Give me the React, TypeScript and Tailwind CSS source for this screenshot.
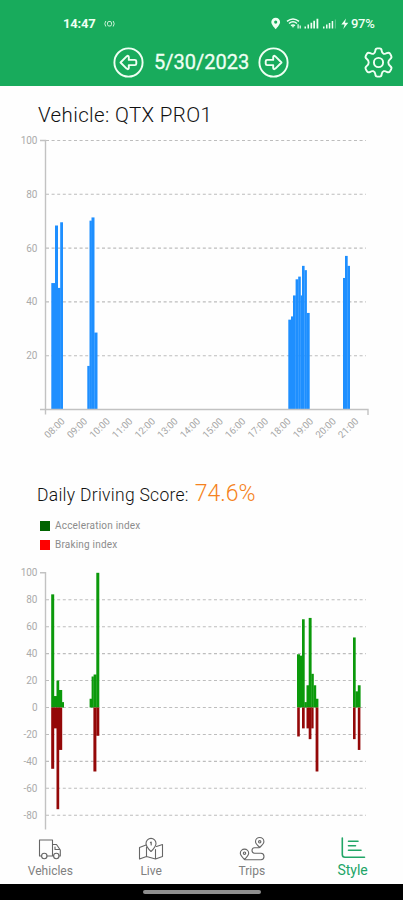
import type { ReactNode } from "react";

type BarType = {
  x: number;
  w: number;
  value: number;
};

type NavItemProps = {
  label: string;
  active?: boolean;
  children: ReactNode;
};

const hours = [
  "08:00", "09:00", "10:00", "11:00", "12:00", "13:00", "14:00",
  "15:00", "16:00", "17:00", "18:00", "19:00", "20:00", "21:00",
];

const speedBars: BarType[] = [
  { x: 51.3, w: 4.2, value: 47 },
  { x: 55, w: 3, value: 68.4 },
  { x: 57.8, w: 2.8, value: 45.2 },
  { x: 60.2, w: 2.8, value: 69.6 },
  { x: 87.3, w: 2.5, value: 16.2 },
  { x: 89.5, w: 2.4, value: 70.2 },
  { x: 91.5, w: 3, value: 71.4 },
  { x: 94.3, w: 3.2, value: 28.6 },
  { x: 288.3, w: 3, value: 33.4 },
  { x: 291, w: 2.4, value: 34.6 },
  { x: 293, w: 2.8, value: 42.4 },
  { x: 295.6, w: 2.8, value: 48.4 },
  { x: 298.2, w: 2.6, value: 49.4 },
  { x: 300.6, w: 1.6, value: 42.4 },
  { x: 302, w: 2.6, value: 53.4 },
  { x: 304.4, w: 2.5, value: 51.8 },
  { x: 306.7, w: 3, value: 35.9 },
  { x: 343, w: 2.3, value: 48.9 },
  { x: 345, w: 2.7, value: 57.1 },
  { x: 347.4, w: 2.6, value: 53.4 },
];

const accelerationBars: BarType[] = [
  { x: 51.2, w: 3, value: 84 },
  { x: 54, w: 3, value: 8.5 },
  { x: 56.5, w: 2.7, value: 20 },
  { x: 59, w: 3.2, value: 13 },
  { x: 62, w: 2, value: 4 },
  { x: 89.6, w: 2.4, value: 6.5 },
  { x: 91.6, w: 2.2, value: 23 },
  { x: 93.6, w: 3, value: 24.5 },
  { x: 96.3, w: 3, value: 100 },
  { x: 297, w: 3, value: 39.5 },
  { x: 299.8, w: 2.6, value: 38.5 },
  { x: 302, w: 2.7, value: 65.5 },
  { x: 304.4, w: 2.5, value: 4 },
  { x: 306.5, w: 2.5, value: 16.5 },
  { x: 308.7, w: 2.9, value: 66.5 },
  { x: 311.3, w: 2.5, value: 25 },
  { x: 313.6, w: 2.6, value: 16.5 },
  { x: 316, w: 2.4, value: 6.5 },
  { x: 353, w: 2.7, value: 52 },
  { x: 355.5, w: 2.6, value: 12 },
  { x: 357.8, w: 2.8, value: 16.5 },
];

const brakingBars: BarType[] = [
  { x: 51.2, w: 3, value: 45.5 },
  { x: 54, w: 3, value: 15.5 },
  { x: 56.5, w: 2.7, value: 75.5 },
  { x: 59, w: 3.2, value: 31.5 },
  { x: 93.4, w: 3, value: 47.5 },
  { x: 96.3, w: 3, value: 21 },
  { x: 297.2, w: 2.6, value: 21.5 },
  { x: 302, w: 2.7, value: 15.5 },
  { x: 306.5, w: 2.5, value: 15.5 },
  { x: 308.7, w: 2.7, value: 23.5 },
  { x: 311.2, w: 2.4, value: 15.5 },
  { x: 315.6, w: 2.8, value: 47.5 },
  { x: 353, w: 2.6, value: 23.5 },
  { x: 357.8, w: 2.6, value: 31.5 },
];

const SpeedChart = () => {
  const toY = (value: number) => 279.5 - value * 2.69;

  return (
    <svg width="403" height="320" viewBox="0 0 403 320" className="block">
      {[20, 40, 60, 80, 100].map((tick) => (
        <g key={tick}>
          <line x1="46" x2="366" y1={toY(tick)} y2={toY(tick)} stroke="#bdbdbd" strokeWidth="1.1" strokeDasharray="3 2.6" />
          <text x="37.5" y={toY(tick) + 3.5} textAnchor="end" fontSize="10" fill="#ababab">{tick}</text>
        </g>
      ))}
      {speedBars.map((bar) => (
        <rect key={bar.x} x={bar.x} width={bar.w} y={toY(bar.value)} height={bar.value * 2.69} fill="#1e8fff" />
      ))}
      <path d="M40 10.5H45.5V284.5M40 279.5H368V285" fill="none" stroke="#c2c2c2" strokeWidth="1.4" />
      {hours.map((hour, i) => (
        <text
          key={hour}
          transform={`translate(${54.5 + i * 22.6} 298) rotate(-45)`}
          y="3.3"
          textAnchor="middle"
          fontSize="9.7"
          fill="#a6a6a6"
        >
          {hour}
        </text>
      ))}
    </svg>
  );
};

const ScoreChart = () => {
  const zero = 147.5;
  const scale = 1.347;

  return (
    <svg width="403" height="270" viewBox="0 0 403 270" className="block">
      {[100, 80, 60, 40, 20, 0, -20, -40, -60, -80].map((tick) => (
        <g key={tick}>
          {tick !== 100 && (
            <line x1="46" x2="366" y1={zero - tick * scale} y2={zero - tick * scale} stroke="#bdbdbd" strokeWidth="1.1" strokeDasharray="3 2.6" />
          )}
          <text x="37.5" y={zero - tick * scale + 3.5} textAnchor="end" fontSize="10" fill="#ababab">{tick}</text>
        </g>
      ))}
      <path d="M40 12.8H45.5V269.5" fill="none" stroke="#c2c2c2" strokeWidth="1.4" />
      {accelerationBars.map((bar) => (
        <rect key={bar.x} x={bar.x} width={bar.w} y={zero - bar.value * scale} height={bar.value * scale} fill="#0b990b" />
      ))}
      {brakingBars.map((bar) => (
        <rect key={bar.x} x={bar.x} width={bar.w} y={zero} height={bar.value * scale} fill="#940808" />
      ))}
    </svg>
  );
};

const ArrowButton = ({ flip = false }: { flip?: boolean }) => {
  return (
    <button className="size-[31px]">
      <svg viewBox="0 0 31 31" className={flip ? "-scale-x-100" : ""} fill="none" stroke="#effff3" strokeLinejoin="round">
        <circle cx="15.5" cy="15.5" r="14.1" strokeWidth="1.9" />
        <path d="M7.5 15.5 13.6 9.4Q15.4 8 15.8 10V12.9H21.8Q23.3 12.9 23.3 14.2V16.8Q23.3 18.1 21.8 18.1H15.8V21Q15.4 23 13.6 21.6Z" strokeWidth="1.9" />
      </svg>
    </button>
  );
};

const StatusBar = () => {
  return (
    <div className="flex h-9 items-start pt-4 pl-[63px] text-[13px] leading-[15px] font-bold text-[#effff3]">
      <span className="w-[41px] tracking-[-0.2px]">14:47</span>
      <svg width="11" height="15" viewBox="0 0 11 15" fill="none" stroke="#c9f0d5" strokeWidth="1">
        <rect x="3.5" y="5.5" width="4" height="4.5" rx="1.5" />
        <path d="M1.8 5Q-.2 7.8 1.8 10.5M9.2 5Q11.2 7.8 9.2 10.5" />
      </svg>
      <div className="ml-[156px] flex">
        <svg width="80" height="15" viewBox="0 -0.5 80 15" fill="#effff3">
          <path fillRule="evenodd" d="M4.7 1.2A4.4 4.4 0 0 0 .3 5.6C.3 8.5 4.7 12.7 4.7 12.7S9.1 8.5 9.1 5.6A4.4 4.4 0 0 0 4.7 1.2ZM4.7 4A1.6 1.6 0 1 1 4.7 7.2A1.6 1.6 0 1 1 4.7 4Z" />
          <path d="M16 4.8Q22 0 28 4.8M18 7Q22 3.6 26 7M20 9.2Q22 7.6 24 9.2" fill="none" stroke="#effff3" strokeWidth="1.5" />
          <path d="M21 9.5H23L22 11.5ZM26.5 7.8H27.7V12H26.5ZM28.6 9H29.8V12H28.6Z" />
          <path d="M33.5 10H35V12H33.5ZM36.5 8H38V12H36.5ZM39.5 6.2H41.2V12H39.5ZM42.3 4.2H44V12H42.3ZM45.5 2.3H47.3V12H45.5Z" />
          <path d="M52 10H53.5V12H52ZM55 8H56.5V12H55ZM57.8 6.5H59.3V12H57.8ZM60.7 4.5H62.2V12H60.7Z" />
          <path d="M63.8 3H65V12H63.8Z" opacity=".3" />
          <path d="M75 2 70.3 8H73.6L72.3 12.5 77.3 6.3H74Z" />
        </svg>
        <span className="font-medium tracking-[-0.3px]">97%</span>
      </div>
    </div>
  );
};

const NavItem = ({ label, active = false, children }: NavItemProps) => {
  return (
    <button className={`flex flex-1 flex-col items-center pt-1.5 ${active ? "text-[#21a567]" : "text-[#666666]"}`}>
      <svg width="26" height="26" viewBox="0 0 26 26" fill="none" stroke="currentColor" strokeWidth="1.1" strokeLinecap="round" strokeLinejoin="round">
        {children}
      </svg>
      <span className={active ? "text-[14px] leading-4" : "pt-px text-[12px] leading-4 text-[#808080]"}>{label}</span>
    </button>
  );
};

const App = () => {
  return (
    <div className="flex h-[900px] w-[403px] flex-col overflow-hidden bg-[#fefefe] font-[Roboto,sans-serif]">
      <header className="h-[86px] shrink-0 bg-[#18ab5c]">
        <StatusBar />
        <div className="grid grid-cols-[1fr_auto_1fr] items-center pt-[10px]">
          <div />
          <div className="mr-px flex items-center gap-[10px]">
            <ArrowButton />
            <span className="w-[94px] text-center text-[20px] leading-8 whitespace-nowrap text-[#effff3] [-webkit-text-stroke:0.3px_#effff3]">5/30/2023</span>
            <ArrowButton flip />
          </div>
          <svg width="31" height="31" viewBox="0 0 31 31" className="mr-[9px] justify-self-end" fill="none" stroke="#effff3" strokeWidth="1.9" strokeLinejoin="round">
            <path d="M12.3 3.8Q12.5 1.4 14.3 1.4H16.7Q18.5 1.4 18.7 3.8Q18.9 6 20.7 6.8Q22.3 7.2 23.8 6.1Q25.8 5 27 6.6L28.2 8.8Q29.1 10.6 27.3 11.9Q25.3 13.3 25.3 15.5T27.3 19.1Q29.1 20.4 28.2 22.2L27 24.4Q25.8 26 23.8 24.9Q22.3 23.8 20.7 24.2Q18.9 25 18.7 27.2Q18.5 29.6 16.7 29.6H14.3Q12.5 29.6 12.3 27.2Q12.1 25 10.3 24.2Q8.7 23.8 7.2 24.9Q5.2 26 4 24.4L2.8 22.2Q1.9 20.4 3.7 19.1Q5.7 17.7 5.7 15.5T3.7 11.9Q1.9 10.6 2.8 8.8L4 6.6Q5.2 5 7.2 6.1Q8.7 7.2 10.3 6.8Q12.1 6 12.3 3.8Z" />
            <circle cx="15.5" cy="15.5" r="4.6" />
          </svg>
        </div>
      </header>

      <main className="h-[744px] shrink-0">
        <h1 className="h-11 pt-4 pl-[38px] text-[20.5px] leading-[26px] font-light tracking-[0.37px] text-[#111111]">Vehicle: QTX PRO1</h1>
        <SpeedChart />

        <div className="flex h-[66px] items-baseline pt-[31px] pl-[37px]">
          <h2 className="text-[17.5px] leading-[26px] font-light tracking-[0.28px] text-[#111111]">Daily Driving Score:</h2>
          <span className="ml-[6px] text-[23px] leading-[26px] font-light text-[#f58220]">74.6%</span>
        </div>
        <div className="flex h-11 flex-col gap-1 pt-[2px] pl-10 text-[10px] leading-[15px] tracking-[0.2px] text-[#8c8c8c]">
          <div className="flex items-center gap-[5px]">
            <span className="size-[10px] bg-[#006400]" />
            Acceleration index
          </div>
          <div className="flex items-center gap-[5px]">
            <span className="size-[10px] bg-[#ff0000]" />
            Braking index
          </div>
        </div>
        <ScoreChart />
      </main>

      <nav className="flex h-[54px] shrink-0">
        <NavItem label="Vehicles">
          <path d="M4.5 20H2.5V4H15.5V20H10M15.5 8.5H19.5L23.3 14V20H22M16.5 20H15M18 11V13.5H23" />
          <circle cx="7.3" cy="20" r="2.7" />
          <circle cx="19.3" cy="20" r="2.7" />
        </NavItem>
        <NavItem label="Live">
          <path d="M8 9 1.5 11.5V23L8.5 20.5 17.5 23 24.5 20.5V8.5L18.5 10.5M8.5 11V20.5M17.5 13.5V23" />
          <path d="M13 15.5Q8 10.5 8 7.4A5 5 0 0 1 18 7.4Q18 10.5 13 15.5Z" />
          <path d="M12.4 6.6 13.2 6V9" />
        </NavItem>
        <NavItem label="Trips">
          <path d="M20.7 11.5Q16.5 7.5 16.5 5.7A4.2 4.2 0 0 1 24.9 5.7Q24.9 7.5 20.7 11.5ZM5.5 23.5Q1.3 19.3 1.3 17.3A4.2 4.2 0 0 1 9.7 17.3Q9.7 19.3 5.5 23.5Z" />
          <path d="M20 11.8H15.5Q13 12 13 14.5T15.5 17.2H22Q25 17.4 25 20.4T22 23.7H6" />
          <circle cx="20.7" cy="5.8" r="1.2" />
          <circle cx="5.5" cy="17.2" r="1.2" />
        </NavItem>
        <NavItem label="Style" active>
          <path d="M2.3 2V18.5Q2.3 21.3 5 21.3H24.5M8.5 5.3H18M8.5 9.7H15.5M8.5 14.3H21" strokeWidth="1.6" />
        </NavItem>
      </nav>
      <div className="flex h-4 shrink-0 justify-center bg-black pt-[6px]">
        <div className="h-1 w-[118px] rounded-full bg-[#8e8e8e]" />
      </div>
    </div>
  );
};

export default App;
